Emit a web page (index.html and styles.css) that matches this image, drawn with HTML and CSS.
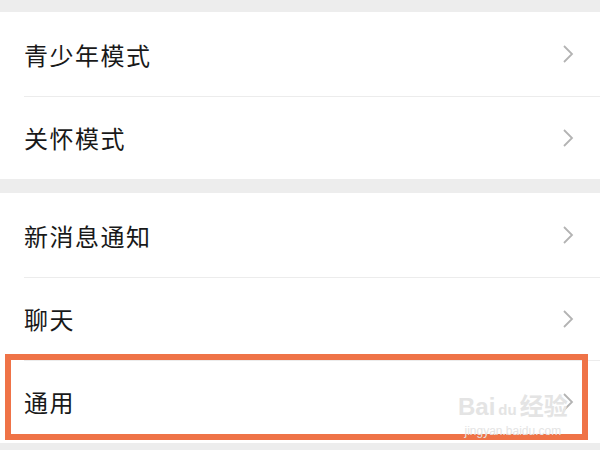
FILE: index.html
```html
<!DOCTYPE html>
<html lang="zh-CN">
<head>
    <meta charset="UTF-8">
    <meta name="viewport" content="width=device-width, initial-scale=1.0">
    <title>设置</title>
    <link rel="stylesheet" href="styles.css">
</head>

<body>
    <div class="page">
        <div class="group">
            <div class="row">
                <span class="label">青少年模式</span>
                <svg class="chevron" viewBox="0 0 12 18"><polyline points="2,1 10,9 2,17"/></svg>
            </div>
            <div class="row">
                <span class="label">关怀模式</span>
                <svg class="chevron" viewBox="0 0 12 18"><polyline points="2,1 10,9 2,17"/></svg>
            </div>
        </div>

        <div class="group">
            <div class="row">
                <span class="label">新消息通知</span>
                <svg class="chevron" viewBox="0 0 12 18"><polyline points="2,1 10,9 2,17"/></svg>
            </div>
            <div class="row">
                <span class="label">聊天</span>
                <svg class="chevron" viewBox="0 0 12 18"><polyline points="2,1 10,9 2,17"/></svg>
            </div>
            <div class="row highlighted">
                <span class="label">通用</span>
                <svg class="chevron" viewBox="0 0 12 18"><polyline points="2,1 10,9 2,17"/></svg>
                <div class="mark-box"></div>
                <div class="watermark">
                    <span class="wm-logo">Bai<span class="wm-paw">du</span>经验</span>
                    <span class="wm-url">jingyan.baidu.com</span>
                </div>
            </div>
        </div>
    </div>
</body>
</html>
```

FILE: styles.css
```css
body {
    margin: 0;
    background-color: #ededed;
    font-family: "Noto Sans CJK SC", "Noto Sans", sans-serif;
}

.page {
    padding-top: 12px;
}

.group {
    background-color: #ffffff;
}

.group + .group {
    margin-top: 14px;
}

.row {
    position: relative;
    height: 83px;
    display: flex;
    align-items: center;
    justify-content: space-between;
    padding: 0 26px 0 24px;
}

.group .row:first-child {
    height: 84px;
}

.row + .row::before {
    content: '';
    position: absolute;
    top: 0;
    left: 24px;
    right: 0;
    height: 1px;
    background-color: #ececec;
}

.label {
    font-size: 24px;
    color: #191919;
    letter-spacing: 1.5px;
}

.chevron {
    width: 12px;
    height: 18px;
    fill: none;
    stroke: #b3b3b3;
    stroke-width: 1.8;
}

.mark-box {
    position: absolute;
    top: -6px;
    left: 5px;
    right: 12px;
    bottom: 3px;
    border: 6px solid #ef7347;
}

.watermark {
    position: absolute;
    left: 458px;
    top: 34px;
    display: flex;
    flex-direction: column;
    align-items: center;
    color: #e4e4e4;
    font-family: "Liberation Sans", "Noto Sans CJK SC", sans-serif;
}

.wm-logo {
    font-size: 24px;
    font-weight: bold;
    line-height: 26px;
}

.wm-paw {
    font-size: 15px;
    margin: 0 3px;
}

.wm-url {
    font-size: 12px;
    line-height: 16px;
}
```
